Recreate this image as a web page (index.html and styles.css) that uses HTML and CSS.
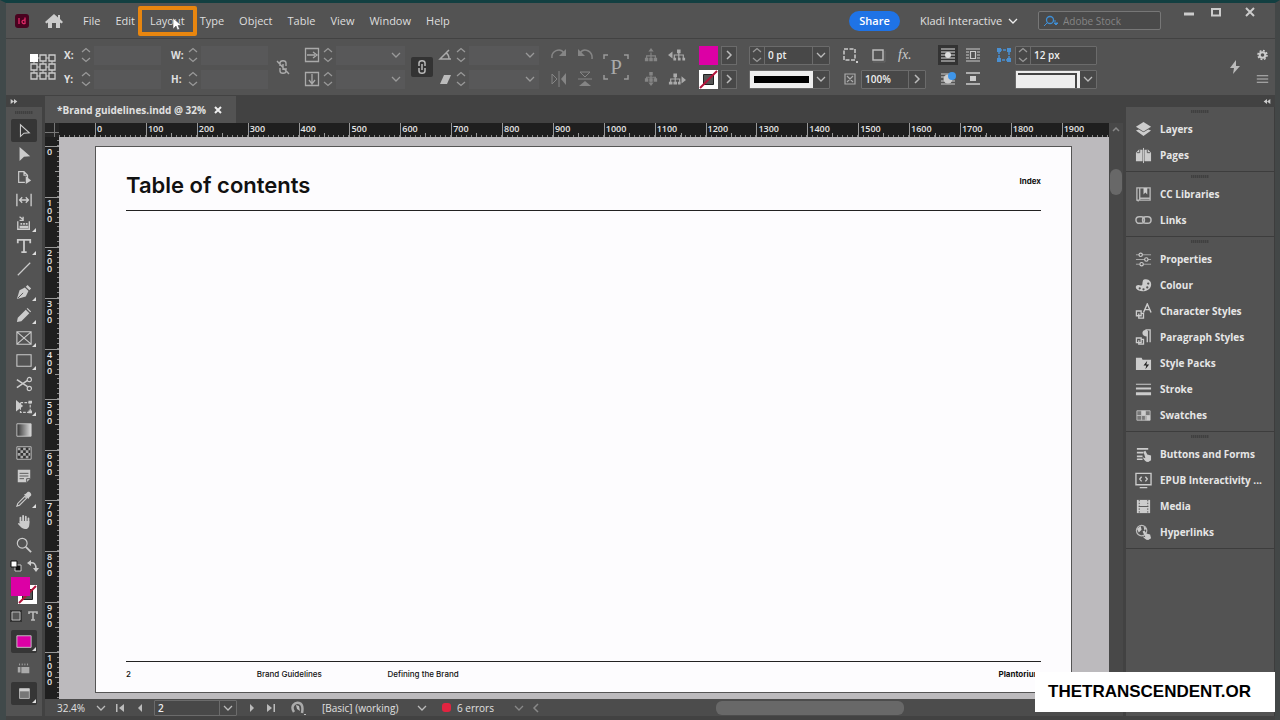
FILE: index.html
```html
<!DOCTYPE html>
<html lang="en">
  <head>
    <title>Brand guidelines.indd</title>
    <meta charset="UTF-8" />
    <link rel="stylesheet" href="styles.css">
  </head>

  <body>
    <!-- Shared glyphs -->
    <svg class="sprite" aria-hidden="true">
      <symbol id="down" viewBox="0 0 10 10"><path d="M1 3l4 4 4-4" fill="none" stroke="currentColor" stroke-width="1.3"/></symbol>
      <symbol id="right" viewBox="0 0 10 10"><path d="M3 1l4 4-4 4" fill="none" stroke="currentColor" stroke-width="1.5"/></symbol>
      <symbol id="updown" viewBox="0 0 10 16"><path d="M1 5l4-3.500 4 3.500M1 11l4 3.500 4-3.500" fill="none" stroke="currentColor" stroke-width="1.3"/></symbol>
      <symbol id="tree" viewBox="0 0 16 16"><path d="M8 5v4M3 12V9h10v3M8 9v3" fill="none" stroke="currentColor" stroke-width="1.3"/><path d="M8 0l3 4H5zM1 11h4v4H1zM6 11h4v4H6zM11 11h4v4h-4z" fill="currentColor"/></symbol>
      <symbol id="treeside" viewBox="0 0 20 16"><path d="M12 4v4M7 12V8h10v4M12 8v4" fill="none" stroke="currentColor" stroke-width="1.3"/><path d="M0 8l5-4v8zM10 2h4v4h-4zM6 11h3v3H6zM11 11h3v3h-3zM16 11h3v3h-3z" fill="currentColor"/></symbol>
      <symbol id="treedown" viewBox="0 0 16 16"><path d="M8 4v8M3 8V6h10v2" fill="none" stroke="currentColor" stroke-width="1.3"/><path d="M8 16l3-4H5zM6 0h4v4H6zM1 7h4v4H1zM6 7h4v4H6zM11 7h4v4h-4z" fill="currentColor"/></symbol>
      <symbol id="treeright" viewBox="0 0 20 16"><path d="M8 4v4M3 12V8h10v4M8 8v4" fill="none" stroke="currentColor" stroke-width="1.3"/><path d="M20 9l-5-4v8zM6 2h4v4H6zM1 11h4v3H1zM6 11h4v3H6zM11 11h3v3h-3z" fill="currentColor"/></symbol>
      <symbol id="none" viewBox="0 0 19 19"><path fill="#fff" d="M0 0h19v19H0z"/><path fill="#555" stroke="#222" d="M4.500 4.500h10v10h-10z"/><path d="M1 18L18 1" stroke="#b3123a" stroke-width="2"/></symbol>
    </svg>

    <div id="root">

      <!-- Menu bar -->
      <header class="menubar">
        <svg class="applogo" viewBox="0 0 14 14"><rect width="14" height="14" rx="3" fill="#49021f"/><path d="M4 4v6M10 3.500v6.500M10 6.300c-4-1-4 4 0 3.300" fill="none" stroke="#e02a67" stroke-width="1.300"/></svg>
        <button class="iconbtn home" aria-label="Home"><svg viewBox="0 0 18 16"><path fill="#ccc" d="M9 1L0 9l1.500 1.500L3 9.500V15h4v-5h4v5h4V9.500l1.500 1L18 9l-3-3V2h-2v2.500z"/></svg></button>
        <nav class="menu">
          <a href="#">File</a>
          <a href="#">Edit</a>
          <a href="#" class="marked">Layout
            <svg class="cursor" viewBox="0 0 10 14"><path fill="#fff" stroke="#555" stroke-width=".6" d="M1 1v11l3-3 1.500 4 2-1L6 8.500h3.500z"/></svg>
          </a>
          <a href="#">Type</a>
          <a href="#">Object</a>
          <a href="#">Table</a>
          <a href="#">View</a>
          <a href="#">Window</a>
          <a href="#">Help</a>
        </nav>
        <button class="share">Share</button>
        <button class="workspace">Kladi Interactive <svg class="chev"><use href="#down"/></svg></button>
        <label class="stock">
          <svg viewBox="0 0 16 12"><path d="M1 11l3-3M13 6l-3 0M11 8h4l-2 2z" stroke="#3f8fd6" fill="#3f8fd6"/><circle cx="7" cy="5" r="3.500" fill="none" stroke="#3f8fd6" stroke-width="1.300"/></svg>
          <input type="text" placeholder="Adobe Stock">
        </label>
        <div class="winbtns">
          <button aria-label="Minimise"><svg viewBox="0 0 12 12"><path d="M1 8h10" stroke="#ccc" stroke-width="3"/></svg></button>
          <button aria-label="Maximise"><svg viewBox="0 0 12 12"><path d="M2 3h8v6.500H2z" fill="none" stroke="#ccc" stroke-width="2"/></svg></button>
          <button aria-label="Close"><svg viewBox="0 0 12 12"><path d="M2 2l8 8M10 2l-8 8" stroke="#ccc" stroke-width="2"/></svg></button>
        </div>
      </header>

      <!-- Control bar -->
      <div class="control">
        <svg class="refpoint" viewBox="0 0 26 26"><path d="M4 4h18v18H4zM13 4v18M4 13h18" fill="none" stroke="#ccc"/><g fill="#505050" stroke="#ccc" stroke-width="1.300"><path d="M10 1h6v6h-6zM19 1h6v6h-6zM1 10h6v6H1zM10 10h6v6h-6zM19 10h6v6h-6zM1 19h6v6H1zM10 19h6v6h-6zM19 19h6v6h-6z"/></g><path fill="#fff" d="M0 0h8v8H0z"/></svg>
        <div class="pair coords">
          <label class="field dim">X: <svg class="step"><use href="#updown"/></svg><input type="text"></label>
          <label class="field dim">Y: <svg class="step"><use href="#updown"/></svg><input type="text"></label>
        </div>
        <div class="pair coords size">
          <label class="field dim">W: <svg class="step"><use href="#updown"/></svg><input type="text"></label>
          <label class="field dim">H: <svg class="step"><use href="#updown"/></svg><input type="text"></label>
        </div>
        <svg class="ico unlink" viewBox="0 0 16 16"><path d="M5 7V4c0-3 6-3 6 0v3M5 9v3c0 3 6 3 6 0V9M8 5v6M2 2l12 13" fill="none" stroke="#aaa" stroke-width="1.400"/></svg>
        <div class="pair scale">
          <label class="field dim" aria-label="Scale X"><svg class="ico" viewBox="0 0 16 16"><path d="M1.500 1.500h13v13h-13zM3 8h8M9 5l4 3-4 3" fill="none" stroke="#aaa" stroke-width="1.300"/></svg><svg class="step"><use href="#updown"/></svg><input type="text"><svg class="chev"><use href="#down"/></svg></label>
          <label class="field dim" aria-label="Scale Y"><svg class="ico" viewBox="0 0 16 16"><path d="M1.500 1.500h13v13h-13zM8 3v9M5 9l3 4 3-4" fill="none" stroke="#aaa" stroke-width="1.300"/></svg><svg class="step"><use href="#updown"/></svg><input type="text"><svg class="chev"><use href="#down"/></svg></label>
        </div>
        <button class="linkbtn" aria-label="Constrain proportions"><svg class="ico" viewBox="0 0 16 16"><path d="M5 7V4c0-3 6-3 6 0v3M5 9v3c0 3 6 3 6 0V9M8 5v6" fill="none" stroke="#bbb" stroke-width="1.500"/></svg></button>
        <div class="pair angle">
          <label class="field dim" aria-label="Rotation"><svg class="ico" viewBox="0 0 16 16"><path d="M12 3L3 12h11M9 6c2 1 3 3 3 6" fill="none" stroke="#aaa" stroke-width="1.500"/></svg><svg class="step"><use href="#updown"/></svg><input type="text"><svg class="chev"><use href="#down"/></svg></label>
          <label class="field dim" aria-label="Shear"><svg class="ico" viewBox="0 0 16 16"><path d="M7 4h7l-4 9H3z" fill="#bbb"/></svg><svg class="step"><use href="#updown"/></svg><input type="text"><svg class="chev"><use href="#down"/></svg></label>
        </div>
        <div class="pair icons faded rotate">
          <div><svg class="ico" viewBox="0 0 16 16"><path d="M1 11C0 4 9 0 13 6" fill="none" stroke="currentColor" stroke-width="1.500"/><path d="M15 2v7H8z" fill="currentColor"/></svg>
          <svg class="ico" viewBox="0 0 16 16"><path d="M15 12C16 4 7 0 3 6" fill="none" stroke="currentColor" stroke-width="1.500"/><path d="M1 2v7h7z" fill="currentColor"/></svg></div>
          <div><svg class="ico" viewBox="0 0 16 16"><path d="M1 3v10l5-5zM8 0v16" fill="none" stroke="currentColor"/><path d="M15 2v12L10 8z" fill="currentColor"/></svg>
          <svg class="ico" viewBox="0 0 16 16"><path d="M3 1h10L8 6zM1 8h14" fill="none" stroke="currentColor"/><path d="M2 15h12L8 10z" fill="currentColor"/></svg></div>
        </div>
        <div class="bigp">P
          <svg viewBox="0 0 26 26"><path d="M1 5V1h4M21 1h4v4M25 21v4h-4M5 25H1v-4" fill="none" stroke="#999" stroke-width="1.500"/></svg>
        </div>
        <div class="pair icons trees">
          <div><svg class="ico low"><use href="#tree"/></svg><svg class="ico wide"><use href="#treeside"/></svg></div>
          <div><svg class="ico low"><use href="#treedown"/></svg><svg class="ico wide"><use href="#treeright"/></svg></div>
        </div>
        <div class="pair swatches">
          <div><span class="swatch pink"></span><button class="more" aria-label="Fill"><svg class="chev"><use href="#right"/></svg></button></div>
          <div><svg class="swatch"><use href="#none"/></svg><button class="more" aria-label="Stroke"><svg class="chev"><use href="#right"/></svg></button></div>
        </div>
        <div class="pair stroke">
          <label class="field boxed" aria-label="Stroke weight"><svg class="step"><use href="#updown"/></svg><input type="text" value="0 pt"><svg class="chev"><use href="#down"/></svg></label>
          <button class="field boxed" aria-label="Stroke type"><span class="line"></span><svg class="chev"><use href="#down"/></svg></button>
        </div>
        <div class="pair effects">
          <div><svg class="ico" viewBox="0 0 16 16"><path d="M2 2h11v11H2z" fill="none" stroke="#ccc" stroke-width="1.500" stroke-dasharray="4 1.500"/><path d="M14 14h2v2h-2z" fill="#ccc"/></svg>
          <svg class="ico" viewBox="0 0 16 16"><path d="M3 3h10v10H3z" fill="none" stroke="#bbb" stroke-width="1.500"/><path d="M3 15h12V4" fill="none" stroke="#666"/></svg>
          <i class="fx">fx.</i></div>
          <div><svg class="ico" viewBox="0 0 16 16"><path d="M3 3h10v10H3zM5 5l6 6M11 5l-6 6" fill="none" stroke="#aaa" stroke-width="1.200"/></svg>
          <label class="field boxed opacity" aria-label="Opacity"><input type="text" value="100%"><svg class="chev"><use href="#right"/></svg></label></div>
        </div>
        <div class="pair icons wraps">
          <div><svg class="ico on" viewBox="0 0 16 16"><path d="M1 2h14M1 5h14M1 8h14M1 11h14M1 14h14" stroke="#ddd"/><circle cx="8" cy="8" r="3" fill="#ddd"/></svg>
          <svg class="ico" viewBox="0 0 16 16"><path d="M1 2h14M1 5h3M1 8h3M1 11h3M12 5h3M12 8h3M12 11h3M1 14h14M5.500 4.500h5v7h-5z" stroke="#ccc" fill="none" stroke-width="1.200"/></svg></div>
          <div><svg class="ico" viewBox="0 0 16 16"><path d="M1 3h14M1 6h14M1 10h14M1 13h14" stroke="#ccc"/><circle cx="8" cy="8" r="4.500" fill="#ccc"/><circle cx="12" cy="5" r="4" fill="#3f96ea"/></svg>
          <svg class="ico" viewBox="0 0 16 16"><path d="M1 2h14M1 13h14" stroke="#ccc" stroke-width="1.500"/><path d="M5 5h6v5H5z" fill="#ccc"/></svg></div>
        </div>
        <svg class="ico cornerico" viewBox="0 0 16 16"><path d="M3 3h10v10H3z" fill="none" stroke="#4a8fd0" stroke-width="1.500" stroke-dasharray="3 1"/><path d="M1 1h4v4H1zM11 1h4v4h-4zM1 11h4v4H1zM11 11h4v4h-4z" fill="#4a8fd0"/></svg>
        <div class="pair corners">
          <label class="field boxed" aria-label="Corner size"><svg class="step"><use href="#updown"/></svg><input type="text" value="12 px"></label>
          <button class="field boxed" aria-label="Corner shape"><span class="corner"></span><svg class="chev"><use href="#down"/></svg></button>
        </div>
        <svg class="ico bolt" viewBox="0 0 16 16"><path d="M9 1L3 9h4l-1 6 7-8H9z" fill="#bbb"/></svg>
        <div class="pair prefs">
          <button class="iconbtn" aria-label="Settings"><svg class="ico" viewBox="0 0 16 16"><circle cx="8" cy="8" r="3.500" fill="none" stroke="#ccc" stroke-width="2.500"/><circle cx="8" cy="8" r="5.500" fill="none" stroke="#ccc" stroke-width="2" stroke-dasharray="2.300 2"/></svg></button>
          <button class="iconbtn" aria-label="Panel menu"><svg class="ico" viewBox="0 0 16 16"><path d="M1 4h14M1 8h14M1 12h14" stroke="#bbb" stroke-width="1.500"/></svg></button>
        </div>
      </div>

      <div class="workarea">

        <!-- Tools -->
        <aside class="tools">
          <div class="collapse"><svg viewBox="0 0 8 6"><path d="M0 0l4 3-4 3zM4 0l4 3-4 3z" fill="#ccc"/></svg></div>
          <div class="toolbox">
            <div class="grip"></div>
            <button class="on" aria-label="Selection"><svg viewBox="0 0 18 18"><path d="M5 2v13l4-3.500 6-.5z" fill="none" stroke="#ccc" stroke-width="1.200"/></svg></button>
            <button aria-label="Direct selection"><svg viewBox="0 0 18 18"><path d="M4 1v16l5-5 7-.5z" fill="#ccc"/></svg></button>
            <button aria-label="Page"><svg viewBox="0 0 18 18"><path d="M10 15H3V3h6l4 4v3M9 3v4h4" fill="none" stroke="#ccc" stroke-width="1.300"/><path d="M11 8v9l6-4z" fill="#ccc"/></svg></button>
            <button aria-label="Gap"><svg viewBox="0 0 18 18"><path d="M1 2v14M17 2v14M4 9h10M7 6L4 9l3 3M11 6l3 3-3 3" fill="none" stroke="#ccc" stroke-width="1.500"/></svg></button>
            <button class="sub" aria-label="Content collector"><svg viewBox="0 0 18 18"><path d="M2 7v9h13V7M4 2l4 3M8 2v4H4" fill="none" stroke="#ccc" stroke-width="1.500"/><path d="M5 9h2v2H5zM8 9h2v2H8zM11 9h2v2h-2zM4 12h10v3H4z" fill="#ccc"/></svg></button>
            <button class="sub" aria-label="Type"><svg viewBox="0 0 18 18"><path d="M2 6V2h14v4M9 2v14M6 16h6" fill="none" stroke="#ccc" stroke-width="2"/></svg></button>
            <button aria-label="Line"><svg viewBox="0 0 18 18"><path d="M2 16L16 2" stroke="#ccc" stroke-width="1.300"/></svg></button>
            <button class="sub" aria-label="Pen"><svg viewBox="0 0 18 18"><path d="M1 17L4 7l6-3 4 4-3 6z" fill="#ccc"/><path d="M11 3l2-2 4 4-2 2z" fill="#ccc"/><path d="M2 16l6-6" stroke="#505050"/></svg></button>
            <button class="sub" aria-label="Pencil"><svg viewBox="0 0 18 18"><path d="M1 17l1-5 9-9 4 4-9 9zM12 2l1-1 4 4-1 1z" fill="#ccc"/></svg></button>
            <button class="sub" aria-label="Rectangle frame"><svg viewBox="0 0 18 18"><path d="M1 2h16v14H1zM1 2l16 14M17 2L1 16" fill="none" stroke="#ccc" stroke-width="1.200"/></svg></button>
            <button class="sub" aria-label="Rectangle"><svg viewBox="0 0 18 18"><path d="M1 2h16v13H1z" fill="none" stroke="#ccc" stroke-width="1.200"/></svg></button>
            <button aria-label="Scissors"><svg viewBox="0 0 18 18"><path d="M1 4l12 8M1 13l12-8" stroke="#ccc" stroke-width="1.800"/><circle cx="15" cy="4" r="2.400" fill="none" stroke="#ccc" stroke-width="1.300"/><circle cx="15" cy="14" r="2.400" fill="none" stroke="#ccc" stroke-width="1.300"/></svg></button>
            <button class="sub" aria-label="Free transform"><svg viewBox="0 0 18 18"><path d="M5 4h11v11H5z" fill="none" stroke="#ccc" stroke-width="1.300" stroke-dasharray="3 1.500"/><path d="M0 1v13l8-6z" fill="#ccc"/><path d="M14 2h4v3h-4zM14 13h4v3h-4z" fill="#ccc"/></svg></button>
            <button aria-label="Gradient swatch"><svg viewBox="0 0 18 18"><defs><linearGradient id="grad"><stop stop-color="#333"/><stop offset="1" stop-color="#ddd"/></linearGradient></defs><path d="M1 2h16v14H1z" fill="url(#grad)" stroke="#ccc"/></svg></button>
            <button aria-label="Gradient feather"><svg viewBox="0 0 18 18"><path d="M1 2h16v14H1z" fill="#333" stroke="#ccc"/><path d="M2 3h3v3H2zM8 3h3v3H8zM14 3h2v3h-2zM5 6h3v3H5zM11 6h3v3h-3zM2 9h3v3H2zM8 9h3v3H8zM14 9h2v3h-2zM5 12h3v3H5zM11 12h3v3h-3z" fill="#aaa"/></svg></button>
            <button aria-label="Note"><svg viewBox="0 0 18 18"><path d="M2 2h14v10l-4 4H2z" fill="#ccc"/><path d="M4 6h10M4 9h10M4 12h5M12 16v-4h4" stroke="#505050" fill="none"/></svg></button>
            <button class="sub" aria-label="Eyedropper"><svg viewBox="0 0 18 18"><path d="M1 17l1-3 8-8 2 2-8 8z" fill="none" stroke="#ccc" stroke-width="1.300"/><path d="M9 4l5 5 1-2 2-2c1-2-2-5-4-4l-2 2z" fill="#ccc"/></svg></button>
            <button aria-label="Hand"><svg viewBox="0 0 18 18"><path d="M5 10V4M8 9V2M11 9V3M14 10V5" stroke="#ccc" stroke-width="2" stroke-linecap="round"/><path d="M4 8h11v4c0 3-2 5-5 5-3 0-5-3-8-6l1-1 2 1z" fill="#ccc"/></svg></button>
            <button aria-label="Zoom"><svg viewBox="0 0 18 18"><circle cx="7" cy="7" r="5.500" fill="none" stroke="#ccc" stroke-width="1.300"/><path d="M11 11l6 6" stroke="#ccc" stroke-width="2"/></svg></button>
            <div class="minis">
              <svg viewBox="0 0 12 12"><path d="M5 5h6v6H5z" fill="#111" stroke="#ccc"/><path d="M1 1h6v6H1z" fill="#fff" stroke="#111"/></svg>
              <svg viewBox="0 0 12 12"><path d="M3 3c4-1 6 1 6 6" fill="none" stroke="#ccc" stroke-width="1.500"/><path d="M0 3l4-3v6zM6 8h6l-3 4z" fill="#ccc"/></svg>
            </div>
            <div class="fillstroke"><svg class="strokebox"><use href="#none"/></svg><span class="fillbox"></span></div>
            <div class="minis">
              <svg viewBox="0 0 12 12"><path fill="#333" d="M0 0h12v12H0z"/><path d="M2 2h8v8H2z" fill="#555" stroke="#bbb"/></svg>
              <svg viewBox="0 0 12 12"><path d="M2 4V2h8v2M6 2v8M4 10h4" fill="none" stroke="#bbb" stroke-width="1.600"/></svg>
            </div>
            <button class="on tall sub" aria-label="Apply colour"><svg viewBox="0 0 18 18"><path d="M1 2h16v13H1z" fill="#dc00a5" stroke="#ccc"/></svg></button>
            <button class="tall" aria-label="View options"><svg viewBox="0 0 18 18"><path d="M2 8h3v6H2zM6 8h9v7H6z" fill="#aaa"/><path d="M4 4v2M7 4v2M10 4v2M13 4v2" stroke="#aaa"/></svg></button>
            <button class="on tall sub" aria-label="Screen mode"><svg viewBox="0 0 18 18"><path d="M4 3h11v11H4z" fill="#777" stroke="#bbb"/><path d="M4 3h11v3H4z" fill="#ccc"/></svg></button>
          </div>
        </aside>

        <!-- Document window -->
        <main class="docwin">
          <div class="tabs"><div class="tab">*Brand guidelines.indd @ 32% <button aria-label="Close tab"><svg viewBox="0 0 8 8"><path d="M1 1l6 6M7 1L1 7" stroke="#eee" stroke-width="2"/></svg></button></div></div>
          <div class="viewport">
            <div class="origin"></div>
            <div class="hruler">
              <div class="scale-x">
                <span></span><span>0</span><span>100</span><span>200</span><span>300</span><span>400</span><span>500</span><span>600</span><span>700</span><span>800</span><span>900</span><span>1000</span><span>1100</span><span>1200</span><span>1300</span><span>1400</span><span>1500</span><span>1600</span><span>1700</span><span>1800</span><span>1900</span>
              </div>
            </div>
            <div class="vscroll">
              <svg viewBox="0 0 10 10"><path d="M2 7l3-3 3 3" fill="none" stroke="#888" stroke-width="1.500"/></svg>
              <span class="thumb"></span>
            </div>
            <div class="vruler">
              <div class="scale-y">
                <span></span><span><b>0</b></span><span><b>100</b></span><span><b>200</b></span><span><b>300</b></span><span><b>400</b></span><span><b>500</b></span><span><b>600</b></span><span><b>700</b></span><span><b>800</b></span><span><b>900</b></span><span><b>1000</b></span>
              </div>
            </div>
            <div class="pasteboard">
              <article class="page">
                <header>
                  <h1>Table of contents</h1>
                  <strong>Index</strong>
                </header>
                <footer>
                  <span>2</span>
                  <span>Brand Guidelines</span>
                  <span>Defining the Brand</span>
                  <strong>Plantorium</strong>
                </footer>
              </article>
            </div>
          </div>

          <div class="status">
            <select class="zoom" aria-label="Zoom"><option>32.4%</option></select>
            <svg class="chev"><use href="#down"/></svg>
            <button class="iconbtn first" aria-label="First page"><svg class="chev" viewBox="0 0 10 10"><path d="M1 1h1.500v8H1zM9 1v8L4 5z" fill="#bbb"/></svg></button>
            <button class="iconbtn" aria-label="Previous page"><svg class="chev" viewBox="0 0 10 10"><path d="M7 1v8L3 5z" fill="#bbb"/></svg></button>
            <label class="field boxed pagenum" aria-label="Page"><input type="text" value="2"><svg class="chev"><use href="#down"/></svg></label>
            <button class="iconbtn" aria-label="Next page"><svg class="chev" viewBox="0 0 10 10"><path d="M3 1v8l4-4z" fill="#bbb"/></svg></button>
            <button class="iconbtn" aria-label="Last page"><svg class="chev" viewBox="0 0 10 10"><path d="M7.500 1H9v8H7.500zM1 1v8l5-4z" fill="#bbb"/></svg></button>
            <svg class="ico preflight" viewBox="0 0 16 16"><path d="M4 12C0 6 5 2 9 3c4 1 4 5 3 10" fill="none" stroke="#aaa" stroke-width="2.500"/><path d="M6 5l3 1 1 5-3-2zM14 14h2v1h-2z" fill="#bbb"/></svg>
            <select class="profile" aria-label="Preflight profile"><option>[Basic] (working)</option></select>
            <svg class="chev"><use href="#down"/></svg>
            <span class="errdot"></span>
            <select class="errors" aria-label="Preflight errors"><option>6 errors</option></select>
            <svg class="chev dimmed"><use href="#down"/></svg>
            <svg class="chev dimmed mirror"><use href="#right"/></svg>
            <div class="hscroll"><span></span></div>
          </div>
        </main>

        <!-- Panels -->
        <aside class="panels">
          <div class="collapse"><svg viewBox="0 0 8 6"><path d="M4 0L0 3l4 3zM8 0L4 3l4 3z" fill="#ccc"/></svg></div>
          <div class="dock">
            <section>
              <div class="grip"></div>
              <button><svg viewBox="0 0 18 18"><path d="M9 1l8 5-8 5-8-5z" fill="#ccc"/><path d="M1 10l3-1 5 3 5-3 3 1-8 6z" fill="#ccc"/></svg>Layers</button>
              <button><svg viewBox="0 0 18 18"><path d="M1 6l3-3h4v12H1zM17 6l-3-3h-4v12h7z" fill="#ccc"/><path d="M9 1v16" stroke="#ccc"/><path d="M2 6h3V3M16 6h-3V3" stroke="#555" fill="none"/></svg>Pages</button>
            </section>
            <section>
              <div class="grip"></div>
              <button><svg viewBox="0 0 18 18"><path d="M2 2h14v13H2zM2 15l2 1M5 2v13M5 13h11" fill="none" stroke="#bbb" stroke-width="1.400"/><path d="M9 2h4v7L11 7 9 9z" fill="#ccc"/></svg>CC Libraries</button>
              <button><svg viewBox="0 0 18 18"><rect x="1" y="5" width="9" height="7" rx="3.500" fill="none" stroke="#bbb" stroke-width="1.600"/><rect x="8" y="5" width="9" height="7" rx="3.500" fill="none" stroke="#bbb" stroke-width="1.600"/></svg>Links</button>
            </section>
            <section>
              <div class="grip"></div>
              <button><svg viewBox="0 0 18 18"><path d="M1 4h16M1 9h16M1 14h16" stroke="#aaa"/><g fill="#535353" stroke="#ccc" stroke-width="1.200"><circle cx="6" cy="4" r="1.800"/><circle cx="12" cy="9" r="1.800"/><circle cx="7" cy="14" r="1.800"/></g></svg>Properties</button>
              <button><svg viewBox="0 0 18 18"><path d="M9 3c5-2 9 2 8 6-1 7-13 8-16 3-1-4 3-4 5-3 3 1 1-4 3-6z" fill="#ccc"/><g fill="#535353"><circle cx="5" cy="12" r="1.200"/><circle cx="9" cy="13" r="1.200"/><circle cx="13" cy="11" r="1.200"/><circle cx="14" cy="7" r="1.200"/></g></svg>Colour</button>
              <button><svg viewBox="0 0 18 18"><path d="M9 10l4-9 4 9M10 7h6" fill="none" stroke="#ccc" stroke-width="1.500"/><path d="M1.500 8.500h5v5h-5zM4 11v5h5v-5H7" fill="none" stroke="#ccc" stroke-width="1.400"/></svg>Character Styles</button>
              <button><svg viewBox="0 0 18 18"><path d="M11 1h5v13M13 2v12" fill="none" stroke="#ccc" stroke-width="1.400"/><path d="M13 1v7C6 8 7 1 11 1z" fill="#ccc"/><path d="M1.500 9.500h5v5h-5zM4 12v4h5v-5H7" fill="none" stroke="#ccc" stroke-width="1.400"/></svg>Paragraph Styles</button>
              <button><svg viewBox="0 0 18 18"><path d="M1 3h6l1 2h9v11H1z" fill="#ccc"/><path d="M13 6l-4 5h3l-1 4 4-5h-3z" fill="#222"/></svg>Style Packs</button>
              <button><svg viewBox="0 0 18 18"><path d="M1 3h16v1H1zM1 7h16v2H1zM1 12h16v3H1z" fill="#ccc"/></svg>Stroke</button>
              <button><svg viewBox="0 0 18 18"><path d="M2 4h14v10H2z" fill="#777" stroke="#bbb"/><path d="M7 4v10M11 4v10M2 9h14" stroke="#bbb"/><path d="M7 4h4v5H7zM12 9h4v5h-4z" fill="#ccc"/></svg>Swatches</button>
            </section>
            <section>
              <div class="grip"></div>
              <button><svg viewBox="0 0 18 18"><path d="M2 3h12M2 7h7M2 11h6M2 14h6" stroke="#ccc" stroke-width="1.700"/><path d="M9 6l2-1 2 4 4 1v5l-3 2c-3 0-4-2-6-5l3 1z" fill="#ccc"/></svg>Buttons and Forms</button>
              <button><svg viewBox="0 0 18 18"><path d="M1 1.500h16v12H1zM5 16.500h8M7 5L5 7.500 7 10M11 5l2 2.500L11 10" fill="none" stroke="#ccc" stroke-width="1.400"/></svg>EPUB Interactivity ...</button>
              <button><svg viewBox="0 0 18 18"><path d="M2 2h14v14H2z" fill="#ccc"/><path d="M4.500 2v14M13.500 2v14" stroke="#555" stroke-dasharray="1.500 1.500"/><path d="M4 9h10" stroke="#555"/></svg>Media</button>
              <button><svg viewBox="0 0 18 18"><circle cx="7" cy="7" r="5.500" fill="none" stroke="#bbb" stroke-width="1.300"/><path d="M2 5l4-3 1 4-3 3zM9 2l3 3-2 2z" fill="#ccc"/><path d="M8 8l2-1 2 3 4 1 1 4-3 2c-3 0-4-2-6-4l3 1z" fill="#ccc"/></svg>Hyperlinks</button>
            </section>
          </div>
        </aside>
      </div>
    </div>

    <div class="watermark">THETRANSCENDENT.OR</div>
  </body>
</html>
```
FILE: styles.css
```css
* { box-sizing: border-box; }

body {
  margin: 0;
  background: #3b3c3c;
  color: #e0e0e0;
  font-family: "Open Sans", "Noto Sans", sans-serif;
  font-size: 11px;
}

button, input, select {
  margin: 0;
  padding: 0;
  border: none;
  background: none;
  color: inherit;
  font: inherit;
}
input { min-width: 0; width: 100%; }
select { appearance: none; }
svg { display: block; flex: none; }
.sprite { display: none; }

#root {
  display: flex;
  flex-direction: column;
  height: 100vh;
  min-height: 720px;
  padding-bottom: 4px;
  border-top: 3px solid #123f41;
  border-left: 6px solid #40494a;
  border-right: 5px solid #434747;
  background: #424242;
}

.chev { width: 10px; height: 10px; color: #bbb; }
.ico { width: 16px; height: 16px; }
.iconbtn { display: flex; align-items: center; justify-content: center; }
.mirror { transform: scaleX(-1); }
.dimmed { color: #888; }

/* Menu bar */
.menubar {
  display: flex;
  align-items: center;
  height: 36px;
  padding-left: 9px;
  background: #535353;
  border-bottom: 1px solid #424242;
}
.applogo { width: 14px; height: 14px; }
.home { margin: 0 20px 0 16px; }
.home svg { width: 18px; height: 16px; }
.menu { display: flex; gap: 15px; }
.menu a {
  position: relative;
  color: #dedede;
  line-height: 20px;
  text-decoration: none;
}
.marked::after {
  content: "";
  position: absolute;
  inset: -5px -12px;
  border: 4px solid #e8860f;
  border-radius: 2px;
}
.cursor {
  position: absolute;
  left: 22px;
  top: 6px;
  width: 10px;
  height: 14px;
}
.share {
  width: 51px;
  height: 20px;
  margin-left: auto;
  border-radius: 10px;
  background: #1f73e6;
  color: #fff;
  font-weight: 600;
}
.workspace {
  display: flex;
  align-items: center;
  justify-content: space-between;
  width: 98px;
  margin-left: 20px;
}
.workspace .chev { color: #eee; }
.stock {
  display: flex;
  align-items: center;
  gap: 4px;
  width: 123px;
  height: 19px;
  margin: 0 22px 0 20px;
  padding: 0 4px;
  border: 1px solid #777;
  border-radius: 2px;
  background: #4a4a4a;
  font-size: 10px;
}
.stock svg { width: 16px; height: 12px; }
.stock input::placeholder { color: #858585; opacity: 1; }
.winbtns { display: flex; align-self: flex-start; margin-right: 19px; padding-top: 3px; gap: 15px; }
.winbtns button:last-child { margin-left: 7px; }
.winbtns svg { width: 12px; height: 12px; }

/* Control bar */
.control {
  display: flex;
  align-items: center;
  height: 56px;
  padding-left: 24px;
  background: #535353;
}
.pair { display: flex; flex-direction: column; gap: 5px; }
.pair > div { display: flex; align-items: center; height: 19px; }
.refpoint { width: 26px; height: 26px; margin-right: 8px; }
.field {
  display: flex;
  align-items: center;
  height: 19px;
}
.step { width: 10px; height: 16px; margin: 0 3px; color: #999; }
.dim { font-size: 10px; font-weight: 700; }
.dim input { height: 19px; background: #585859; }
.dim .chev { margin: 0 4px 0 -14px; color: #999; }
.coords { width: 97px; margin-right: 10px; }
.coords .field { display: grid; grid-template-columns: 14px 16px 1fr; }
.size { margin-right: 0; }
.unlink { margin: 0 13px 0 7px; }
.scale { width: 101px; }
.linkbtn { padding: 2px 3px; margin: 0 4px 0 6px; background: #333; border-radius: 2px; }
.angle { width: 102px; margin-right: 12px; }
.icons > div { gap: 10px; }
.faded, .trees .low { color: #858585; }
.bigp {
  position: relative;
  width: 26px;
  height: 26px;
  margin: 0 15px 0 10px;
  color: #aaa;
  font: 21px/26px "Liberation Serif", serif;
  text-align: center;
}
.bigp svg { position: absolute; inset: 0; width: 26px; height: 26px; }
.trees { color: #aaa; }
.trees .wide { width: 18px; }
.trees .low { width: 14px; }
.swatches { margin: 0 12px 0 13px; }
.swatch { width: 19px; height: 19px; margin-right: 3px; }
.pink { background: #dc00a5; }
.more { display: flex; align-items: center; justify-content: center; width: 16px; height: 19px; border: 1px solid #6b6b6b; background: #484848; }
.boxed { border: 1px solid #6b6b6b; border-radius: 1px; background: #484848; font-size: 10px; font-weight: 600; }
.boxed input { height: 17px; padding: 0 3px; border: solid #6b6b6b; border-width: 0 1px; color: #eee; }
.boxed .chev { margin: 0 3px; }
.boxed .step { margin: 0 2px; }
.stroke { width: 81px; }
.line { flex: 1; height: 17px; border: solid #eee; border-width: 5px 4px; background: #000; }
.effects { width: 84px; margin: 0 12px; }
.effects > div { gap: 12px; }
.effects > div:last-child { gap: 3px; }
.fx { color: #ccc; font: italic 14px/18px "Liberation Serif", serif; }
.opacity { flex: 1; }
.opacity input, .pagenum input { border-left-width: 0; }
.wraps .ico { margin: 0 2px; }
.wraps > div { gap: 5px; }
.wraps .on { background: #333; box-shadow: 0 0 0 2px #333; }
.cornerico { align-self: flex-start; margin: 8px 3px 0 13px; }
.corners { width: 82px; }
.corners input { border-right-width: 0; }
.corner { flex: 1; height: 17px; border: solid #eee; border-width: 2px 3px 0 2px; background: #eee; box-shadow: inset -2px 2px #444; }
.bolt { margin: 0 13px 0 auto; }
.prefs { margin-right: 6px; }
.prefs .iconbtn { height: 19px; }
.prefs .ico { width: 13px; }

/* Work area */
.workarea { display: flex; flex: 1; min-height: 0; }
.collapse { height: 12px; padding: 4px 4px 0; }
.collapse svg { width: 8px; height: 5px; }
.panels .collapse svg { margin-left: auto; }
.grip { width: 18px; height: 3px; background: repeating-linear-gradient(90deg, #404040 0 1px, #4a4a4a 1px 2px); }

.tools { width: 36px; display: flex; flex-direction: column; }
.toolbox {
  display: flex;
  flex: 1;
  flex-direction: column;
  align-items: center;
  background: #535353;
}
.toolbox .grip { margin: 4px 0 5px; }
.toolbox button {
  position: relative;
  display: flex;
  align-items: center;
  justify-content: center;
  width: 26px;
  height: 23px;
  border-radius: 2px;
}
.toolbox button svg { width: 16px; height: 16px; }
.toolbox .on { background: #363636; }
.toolbox .tall { margin-top: 3px; }
.sub::after {
  content: "";
  position: absolute;
  right: 1px;
  bottom: 2px;
  border: 2px solid transparent;
  border-right-color: #ddd;
  border-bottom-color: #ddd;
}
.minis { display: flex; gap: 5px; margin: 4px 0 5px; }
.minis svg { width: 12px; height: 12px; }
.fillstroke { position: relative; width: 26px; height: 27px; margin-bottom: 2px; }
.fillbox, .strokebox { position: absolute; width: 19px; height: 19px; }
.fillbox { left: 0; top: 0; background: #dc00a5; }
.strokebox { right: 0; bottom: 0; }

/* Document window */
.docwin { display: flex; flex: 1; flex-direction: column; min-width: 0; margin-left: 3px; }
.tabs { height: 28px; padding-top: 1px; }
.tab {
  display: flex;
  align-items: center;
  gap: 8px;
  width: 191px;
  height: 27px;
  padding-left: 12px;
  background: #535353;
  font-size: 10px;
  font-weight: 700;
}
.tab svg { width: 8px; height: 8px; }
.viewport {
  display: grid;
  flex: 1;
  grid-template: 14px minmax(0, 1fr) / 14px minmax(0, 1fr) 14px;
  min-height: 0;
}
.origin {
  background: linear-gradient(#777, #777) 9px 0 / 1px 100% no-repeat, linear-gradient(#777, #777) 0 9px / 100% 1px no-repeat, #262626;
}
.hruler, .vruler { overflow: hidden; background: #1f1f1f; color: #e4e4e4; font-size: 9px; font-weight: 600; }
.hruler { padding: 0 37px 0 36px; }
.scale-x, .scale-y { position: relative; display: flex; height: 100%; }
.scale-x span {
  flex: 0 0 calc(100% / 19.2);
  padding-left: 1px;
  border-left: 1px solid #999;
  line-height: 12px;
  background:
    linear-gradient(90deg, transparent 49%, #999 49%, #999 51%, transparent 51%) 0 100% / 100% 4px no-repeat,
    repeating-linear-gradient(90deg, transparent 0 8%, #888 8% 10%) 0 100% / 100% 2px no-repeat;
}
.scale-x span:first-child { margin-left: calc(-100% / 19.2); }
.vruler { padding: 9px 0 6px; }
.scale-y { flex-direction: column; }
.scale-y span {
  flex: 0 0 calc(100% / 10.8);
  padding: 1px 0 0 2px;
  border-top: 1px solid #999;
  background:
    linear-gradient(transparent 49%, #999 49%, #999 51%, transparent 51%) 100% 0 / 4px 100% no-repeat,
    repeating-linear-gradient(transparent 0 8%, #888 8% 10%) 100% 0 / 2px 100% no-repeat;
}
.scale-y span:first-child { position: absolute; bottom: 100%; width: 100%; height: calc(100% / 10.8); }
.scale-y b { display: block; width: 8px; font-weight: 600; line-height: 8px; word-break: break-all; }
.vscroll { display: flex; flex-direction: column; align-items: center; grid-row: 1 / 3; grid-column: 3; background: #484848; }
.vscroll svg { width: 10px; height: 10px; margin-top: 1px; }
.thumb { width: 12px; height: 26px; margin-top: 35px; border-radius: 6px; background: #686868; }

.pasteboard {
  display: flex;
  padding: 9px 37px 6px 36px;
  background: #bcbabd;
}
.page {
  display: flex;
  flex: 1;
  flex-direction: column;
  justify-content: space-between;
  padding: 0 30px;
  border: 1px solid #555;
  background: #fdfcfe;
  color: #111;
  font-family: "Inter", sans-serif;
  font-size: 8px;
}
.page header {
  display: flex;
  justify-content: space-between;
  height: 64px;
  padding-top: 26px;
  border-bottom: 1px solid #222;
}
.page h1 { margin: 0; font-size: 22px; font-weight: 600; line-height: 24px; }
.page strong { font-weight: 700; line-height: 16px; }
.page footer {
  display: grid;
  grid-template-columns: repeat(7, 1fr);
  height: 31px;
  padding-top: 4px;
  border-top: 1px solid #222;
  font-weight: 500;
  line-height: 16px;
}
.page footer strong { grid-column: 7; text-align: right; }

/* Status bar */
.status {
  display: flex;
  align-items: center;
  height: 17px;
  padding-left: 12px;
  background: #4c4c4c;
  font-size: 10px;
}
.zoom { width: 39px; }
.status .first { margin: 0 10px 0 9px; }
.pagenum { width: 83px; height: 16px; margin: 0 10px 0 9px; }
.pagenum input { height: 14px; }
.pagenum + .iconbtn { margin-right: 9px; }
.preflight { margin: 0 16px 0 14px; }
.profile { width: 95px; }
.errdot { width: 9px; height: 9px; margin: 0 6px 0 15px; border-radius: 3px; background: #e02440; }
.errors { width: 57px; }
.errors ~ .mirror { margin-left: 7px; }
.hscroll { display: flex; flex: 1; }
.hscroll span { width: 188px; height: 14px; margin-left: 30%; border-radius: 6px; background: #686868; }

/* Panels */
.panels { display: flex; flex-direction: column; width: 151px; margin-left: 1px; }
.dock { flex: 1; margin-left: 2px; border-right: 1px solid #3d3d3d; background: #535353; }
.dock section { padding: 3px 0; border-bottom: 1px solid #3d3d3d; }
.dock .grip { margin: 0 auto 3px; }
.dock button {
  display: flex;
  align-items: center;
  gap: 8px;
  width: 100%;
  height: 26px;
  padding-left: 9px;
  color: #e6e6e6;
  font-size: 10px;
  font-weight: 700;
  white-space: nowrap;
}
.dock button svg { width: 17px; height: 17px; }

.watermark {
  position: fixed;
  right: 5px;
  bottom: 8px;
  width: 240px;
  height: 40px;
  padding-left: 13px;
  background: #fff;
  color: #000;
  font: bold 17px/40px "Liberation Sans", sans-serif;
}
```
